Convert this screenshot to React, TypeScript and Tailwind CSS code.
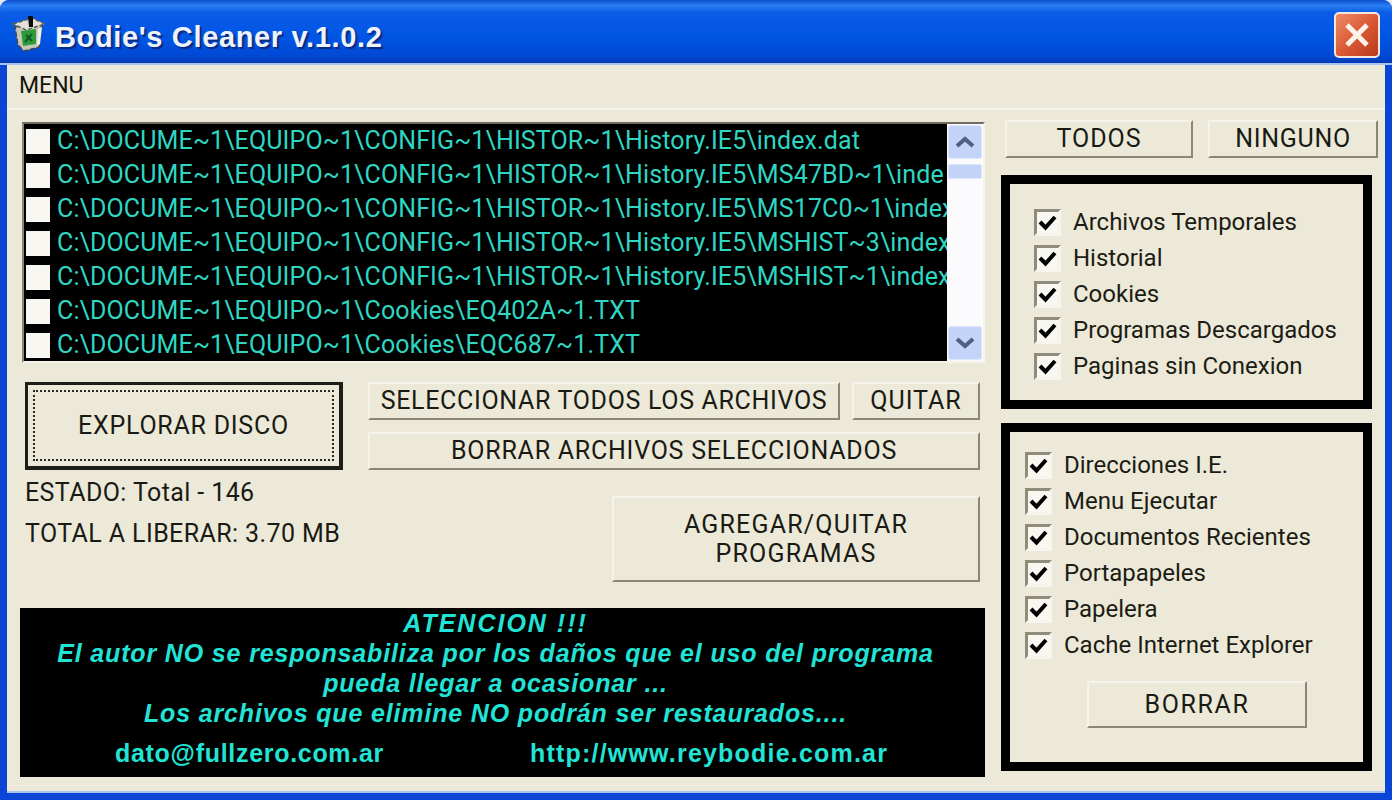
import React from "react";

const font = { fontFamily: 'Roboto, "Liberation Sans", Arial, sans-serif' };
const lib = { fontFamily: '"Liberation Sans", Arial, sans-serif' };

function Btn({ className = "", children }: { className?: string; children: React.ReactNode }) {
  return (
    <div className={"flex items-center justify-center text-center bg-[#ece9d8] border-2 border-t-[#f6f4ea] border-l-[#f6f4ea] border-r-[#8a8776] border-b-[#8a8776] text-[#1a1a14] " + className}>
      {children}
    </div>
  );
}

function Check() {
  return (
    <div className="w-[27px] h-[27px] shrink-0 flex items-center justify-center bg-[#f8f7f0] border-[3px] border-t-[#8f8c7c] border-l-[#8f8c7c] border-r-[#f7f6ee] border-b-[#f7f6ee]">
      <svg width="19" height="17" viewBox="0 0 19 17"><path d="M2 8 L7.5 13.5 L17 3" fill="none" stroke="#000" strokeWidth="4" /></svg>
    </div>
  );
}

function CheckRow({ label }: { label: string }) {
  return (
    <div className="flex items-center gap-[12px] h-[36px]">
      <Check />
      <span className="text-[24px] text-[#1c1c14] whitespace-nowrap">{label}</span>
    </div>
  );
}

const rows = [
  "C:\\DOCUME~1\\EQUIPO~1\\CONFIG~1\\HISTOR~1\\History.IE5\\index.dat",
  "C:\\DOCUME~1\\EQUIPO~1\\CONFIG~1\\HISTOR~1\\History.IE5\\MS47BD~1\\inde",
  "C:\\DOCUME~1\\EQUIPO~1\\CONFIG~1\\HISTOR~1\\History.IE5\\MS17C0~1\\index",
  "C:\\DOCUME~1\\EQUIPO~1\\CONFIG~1\\HISTOR~1\\History.IE5\\MSHIST~3\\index",
  "C:\\DOCUME~1\\EQUIPO~1\\CONFIG~1\\HISTOR~1\\History.IE5\\MSHIST~1\\index",
  "C:\\DOCUME~1\\EQUIPO~1\\Cookies\\EQ402A~1.TXT",
  "C:\\DOCUME~1\\EQUIPO~1\\Cookies\\EQC687~1.TXT",
];

function BinIcon() {
  return (
    <svg width="36" height="38" viewBox="0 0 36 38">
      <path d="M4 12 L31 8 L28 32 L13 36 L7 30 Z" fill="#c8c8ba" stroke="#444a44" strokeWidth="1.5" strokeDasharray="5 2" />
      <path d="M2 9 L21 3 L34 9 L15 15 Z" fill="#e4e2d6" stroke="#5a5e58" strokeWidth="1.5" strokeDasharray="4 2" />
      <path d="M17 1 H22 L22 12 H18 Z" fill="#0c0c0c" />
      <path d="M10 16 L25 14 L25 29 L12 31 Z" fill="#2d9a3c" />
      <path d="M14 27 L21 19 M15 20 L21 26" stroke="#0f5a20" strokeWidth="2" />
      <path d="M27 14 L31 12 L29 29 L26 31 Z" fill="#f2f1e8" />
    </svg>
  );
}

export default function App() {
  return (
    <div style={font} className="w-[1392px] h-[800px] bg-[#dfe8f6] overflow-hidden">
      <div className="w-full h-full rounded-t-[9px] overflow-hidden flex flex-col bg-[#0a45d6]">
        <div className="h-[65px] shrink-0 pt-[6px] flex items-center bg-[linear-gradient(to_bottom,#0a50d0_0%,#2a7ff0_9%,#0a5ce8_20%,#0055e3_60%,#0048d4_90%,#0338b0_100%)] border-b-2 border-b-[#a8c4ee]">
          <div className="ml-[11px] mt-[-1px]"><BinIcon /></div>
          <div style={lib} className="ml-[8px] mt-[7px] text-[29px] font-bold tracking-[0.65px] text-[#eef3fb] [text-shadow:2px_2px_1px_#0a2a80]">Bodie's Cleaner v.1.0.2</div>
          <div className="ml-auto mr-[12px] w-[46px] h-[46px] rounded-[5px] border-2 border-[#f2e6de] bg-gradient-to-br from-[#ec8a68] via-[#dc5a34] to-[#b83a1c] flex items-center justify-center">
            <svg width="30" height="30" viewBox="0 0 30 30"><path d="M5 5 L25 25 M25 5 L5 25" stroke="#fbf3ea" strokeWidth="5" /></svg>
          </div>
        </div>

        <div className="flex-1 mx-[7px] mb-[7px] flex flex-col bg-[#ece9d8] border-b-2 border-b-[#a8c4ee]">
          <div className="h-[45px] shrink-0 flex items-center pl-[12px] text-[23px] text-[#14140e] border-b-2 border-b-[#f8f6ec]">MENU</div>

          <div className="flex flex-1 pl-[13px]">
            <div className="w-[965px] shrink-0 flex flex-col pt-[12px]">
              <div className="ml-[2px] h-[241px] flex border-2 border-t-[#6e6b5e] border-l-[#8a8776] border-r-[#f6f4ea] border-b-[#f6f4ea]">
                <div className="w-[923px] bg-black overflow-hidden flex flex-col">
                  {rows.map((r) => (
                    <div key={r} className="h-[34px] shrink-0 flex items-center whitespace-nowrap">
                      <div className="w-[24px] h-[25px] ml-[2px] bg-[#f8f7f2] shrink-0" />
                      <span className="ml-[7px] text-[25px] tracking-[0.13px] text-[#2fd6c2]">{r}</span>
                    </div>
                  ))}
                </div>
                <div className="flex-1 bg-[#fbfbfd] flex flex-col justify-between px-[1px]">
                  <div>
                    <div className="h-[34px] mt-[1px] rounded-[3px] bg-[#c4d4f8] border border-[#dde6fb] flex items-center justify-center">
                      <svg width="22" height="14" viewBox="0 0 22 14"><path d="M3 11 L11 4 L19 11" fill="none" stroke="#4d6185" strokeWidth="4" /></svg>
                    </div>
                    <div className="h-[15px] mt-[5px] rounded-[2px] bg-[#c4d4f8] border border-[#dde6fb]" />
                  </div>
                  <div className="h-[34px] mb-[1px] rounded-[3px] bg-[#c4d4f8] border border-[#dde6fb] flex items-center justify-center">
                    <svg width="22" height="14" viewBox="0 0 22 14"><path d="M3 3 L11 10 L19 3" fill="none" stroke="#4d6185" strokeWidth="4" /></svg>
                  </div>
                </div>
              </div>

              <div className="flex mt-[19px]">
                <div className="w-[343px] shrink-0 pl-[5px]">
                  <div className="w-[318px] h-[88px] border-[3px] border-[#1e1e18] border-b-[4px] border-r-[4px] p-[5px] bg-[#ece9d8]">
                    <div className="w-full h-full border-2 border-dotted border-[#2a2a22] flex items-center justify-center text-[25px] text-[#1a1a14] tracking-[0.75px]">EXPLORAR DISCO</div>
                  </div>
                  <div className="h-[42px] mt-[2px] flex items-center text-[25px] tracking-[0.4px] text-[#1a1a14] whitespace-nowrap">ESTADO: Total - 146</div>
                  <div className="h-[40px] flex items-center text-[25px] tracking-[0.4px] text-[#1a1a14] whitespace-nowrap">TOTAL A LIBERAR: 3.70 MB</div>
                </div>
                <div className="ml-[5px] w-[612px] flex flex-col">
                  <div className="flex gap-[12px]">
                    <Btn className="w-[472px] h-[38px] text-[25px] tracking-[0.67px] whitespace-nowrap">SELECCIONAR TODOS LOS ARCHIVOS</Btn>
                    <Btn className="w-[128px] h-[38px] text-[25px] tracking-[1px]">QUITAR</Btn>
                  </div>
                  <Btn className="w-[612px] h-[38px] mt-[12px] text-[25px] tracking-[0.75px]">BORRAR ARCHIVOS SELECCIONADOS</Btn>
                  <Btn className="ml-[244px] w-[368px] h-[86px] mt-[26px] text-[25px] leading-[29px] tracking-[1.2px]">AGREGAR/QUITAR<br />PROGRAMAS</Btn>
                </div>
              </div>

              <div style={lib} className="mt-[26px] w-[965px] h-[169px] bg-black text-[#22e4d6] flex flex-col items-center">
                <div className="w-[950px] mr-[14px] text-center italic font-bold text-[25px] leading-[30px] tracking-[0.85px]">
                  <div className="tracking-[2px]">ATENCION !!!</div>
                  <div>El autor NO se responsabiliza por los daños que el uso del programa</div>
                  <div>pueda llegar a ocasionar ...</div>
                  <div>Los archivos que elimine NO podrán ser restaurados....</div>
                </div>
                <div className="w-full flex pt-[10px] pl-[95px] font-bold text-[25px] leading-[30px] whitespace-nowrap">
                  <span className="w-[415px] tracking-[0.7px]">dato@fullzero.com.ar</span>
                  <span className="tracking-[1.2px]">http://www.reybodie.com.ar</span>
                </div>
              </div>
            </div>

            <div className="flex-1 flex flex-col pl-[16px] pt-[10px]">
              <div className="flex gap-[15px] pl-[4px]">
                <Btn className="w-[188px] h-[38px] text-[25px] tracking-[1px]">TODOS</Btn>
                <Btn className="w-[170px] h-[38px] text-[25px] tracking-[0.7px]">NINGUNO</Btn>
              </div>
              <div className="mt-[17px] w-[371px] h-[234px] border-[9px] border-black pl-[24px] pt-[20px]">
                {["Archivos Temporales", "Historial", "Cookies", "Programas Descargados", "Paginas sin Conexion"].map((l) => (
                  <CheckRow key={l} label={l} />
                ))}
              </div>
              <div className="mt-[14px] w-[371px] h-[348px] border-[9px] border-black pl-[15px] pt-[15px] flex flex-col">
                {["Direcciones I.E.", "Menu Ejecutar", "Documentos Recientes", "Portapapeles", "Papelera", "Cache Internet Explorer"].map((l) => (
                  <CheckRow key={l} label={l} />
                ))}
                <Btn className="ml-[62px] mt-[18px] w-[220px] h-[47px] text-[25px] tracking-[1.6px]">BORRAR</Btn>
              </div>
            </div>
          </div>
        </div>
      </div>
    </div>
  );
}
